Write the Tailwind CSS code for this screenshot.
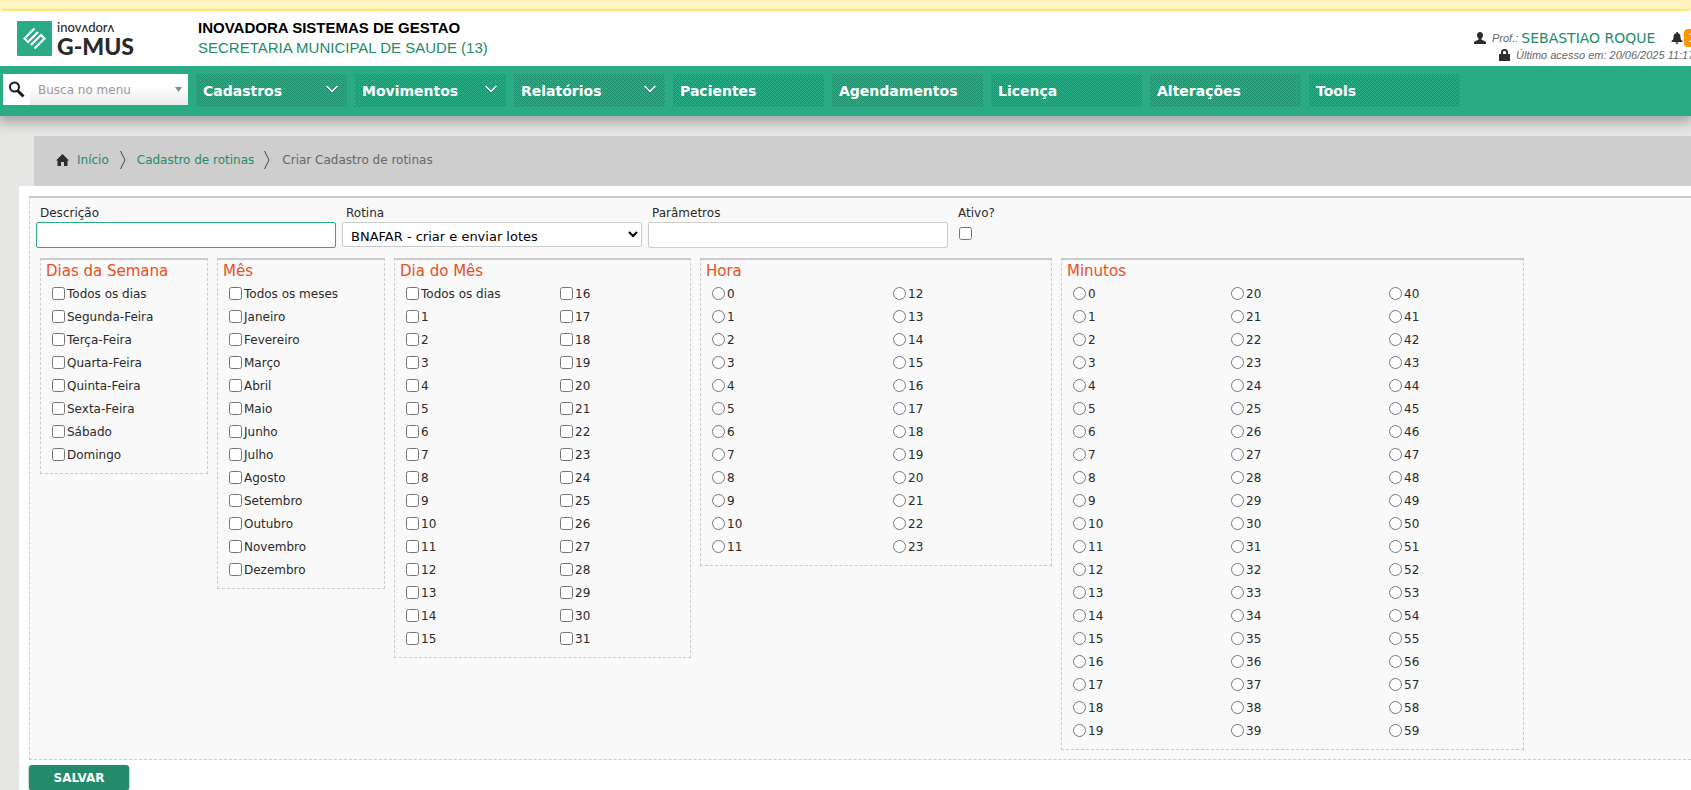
<!DOCTYPE html>
<html lang="pt-BR">
<head>
<meta charset="utf-8">
<meta name="viewport" content="width=device-width, initial-scale=1">
<title>Criar Cadastro de rotinas</title>
<script src="https://cdn.jsdelivr.net/npm/@tailwindcss/browser@4"></script>
</head>
<body class="min-h-screen overflow-x-hidden bg-[#e6e6e4] font-['DejaVu_Sans',sans-serif] text-xs text-[#2a2a2a]">
<div class="flex min-h-screen flex-col">
  <div class="relative z-10 bg-white"><div class="h-[11px] rounded-b border-b-2 border-[#fde770] bg-[#fff4bd]"></div></div>

  <header class="relative z-10 flex h-[55px] overflow-hidden bg-white pl-[17px]">
    <a href="#" class="flex w-[181px] shrink-0 items-start gap-[5px] pt-[10px] text-[#2a2a2a]">
      <svg class="size-[35px] shrink-0" viewBox="0 0 35 35" fill="none" aria-hidden="true">
        <rect width="35" height="35" rx="1" fill="#2bab84"/>
        <g stroke="#fff" stroke-width="2.200">
          <path d="M17.500 7.500 7.500 17.500l3.500 3.500L21 11"/>
          <path d="M17.500 27.500l10-10-3.500-3.500-10 10"/>
        </g>
      </svg>
      <span class="flex flex-col font-['Lato',sans-serif]">
        <span class="text-[13px] leading-[12px] font-medium">inovʌdorʌ</span>
        <span class="text-[23px] leading-[26px] font-black">G-MUS</span>
      </span>
    </a>
    <div class="flex shrink-0 flex-col pt-[7px] font-['Liberation_Sans',Arial,sans-serif] text-[15px] leading-[20px]">
      <strong class="text-black">INOVADORA SISTEMAS DE GESTAO</strong>
      <a href="#" class="text-[#238b69]">SECRETARIA MUNICIPAL DE SAUDE (13)</a>
    </div>
    <div class="ml-auto flex w-[217px] shrink-0 flex-col pt-[17px] whitespace-nowrap text-[#666]">
      <div class="flex h-[20px] items-center">
        <svg class="mr-[6px] size-3 shrink-0" viewBox="0 0 12 12" fill="#2d2d2d" aria-hidden="true"><path d="M6 0c2 0 3 1.300 3 3.200C9 4.800 8.300 6 7.500 6.600v1.200L11 9.200q1 .5 1 1.500V12H0v-1.300q0-1 1-1.500l3.500-1.400V6.600C3.700 6 3 4.800 3 3.200 3 1.300 4 0 6 0z"/></svg>
        <span class="mr-[3px] font-['Liberation_Sans',Arial,sans-serif] text-[11px] italic">Prof.:</span>
        <a href="#" class="text-[14px] text-[#238b69]">SEBASTIAO ROQUE</a>
        <svg class="mr-px ml-4 size-3 shrink-0" viewBox="0 0 12 12" fill="#2d2d2d" aria-hidden="true"><path d="M6 0q1 0 1 1.200C9 1.700 9.500 3.500 9.500 5.500c0 2 1 2.500 2 3.500v1H.5V9c1-1 2-1.500 2-3.500 0-2 .5-3.800 2.500-4.300Q5 0 6 0zM4.500 10.500h3Q7.300 12 6 12t-1.500-1.500z"/></svg>
        <span class="h-[18px] rounded-sm bg-[#ff9600] px-1 text-xs leading-[18px] font-bold text-white">13</span>
      </div>
      <div class="flex h-[14px] items-center pl-[25px]">
        <svg class="mr-[6px] h-3 w-[11px] shrink-0" viewBox="0 0 11 12" fill="#2d2d2d" aria-hidden="true"><path fill-rule="evenodd" d="M0 5h2V3q0-3 3.500-3T9 3v2h2v7H0zM4 5h3V3q0-1-1.500-1T4 3z"/></svg>
        <span class="font-['Liberation_Sans',Arial,sans-serif] text-[11px] italic">Último acesso em: 20/06/2025 11:17</span>
      </div>
    </div>
  </header>

  <nav class="relative flex h-[50px] items-start gap-2 bg-[#2bab84] pt-2 pl-[3px] shadow-[0_4px_12px_2px_rgba(0,0,0,0.3)]">
    <div class="flex h-[31px] w-[185px] shrink-0 items-center bg-white">
      <svg class="mx-[5px] size-[17px] shrink-0" viewBox="0 0 17 17" fill="none" stroke="#1a1a1a" aria-hidden="true"><circle cx="6.500" cy="6" r="4.500" stroke-width="2"/><path d="M9.500 9.500l6 6" stroke-width="3"/></svg>
      <div class="flex h-full flex-1 items-center bg-linear-to-t from-[#eaeaea] to-white to-60% pr-[6px] pl-2">
        <input type="text" aria-label="Busca no menu" placeholder="Busca no menu" class="w-full min-w-0 bg-transparent text-xs placeholder-[#999] outline-none">
        <svg class="h-[5px] w-[7px] shrink-0" viewBox="0 0 7 5" fill="#888" aria-hidden="true"><path d="M0 0h7L3.500 5z"/></svg>
      </div>
    </div>
    <ul id="menu" class="flex gap-2"></ul>
  </nav>

  <nav aria-label="Trilha" class="mt-5 ml-[34px] flex h-[50px] items-center bg-[#cecece] pb-[2px] pl-[22px] text-[#666]">
    <svg class="mr-2 h-3 w-[13px]" viewBox="0 0 13 12" fill="#2d2d2d" aria-hidden="true"><path d="M6.500 0 13 6.500h-1.500V12H8V8H5v4H1.500V6.500H0z"/></svg>
    <a href="#" class="text-[#238b69]">Início</a>
    <svg class="mr-[11px] ml-[11px] h-[18px] w-[6px]" viewBox="0 0 6 18" fill="none" stroke="#444" aria-hidden="true"><path d="M.5 0l4.500 9-4.500 9"/></svg>
    <a href="#" class="text-[#238b69]">Cadastro de rotinas</a>
    <svg class="mr-3 ml-[10px] h-[18px] w-[6px]" viewBox="0 0 6 18" fill="none" stroke="#444" aria-hidden="true"><path d="M.5 0l4.500 9-4.500 9"/></svg>
    <span>Criar Cadastro de rotinas</span>
  </nav>

  <main class="ml-[19px] flex-1 bg-white pt-[10px] pl-[10px]">
    <form>
      <div class="border border-t-2 border-r-0 border-dashed border-[#ccc] bg-[#f9f9f9] pb-[9px] [border-top-style:solid]">
        <div class="flex items-start gap-[6px] pt-2 pl-[6px]">
          <div class="flex w-[300px] flex-col">
            <label for="descricao" class="h-[16px] pl-1 leading-[14px]">Descrição</label>
            <input id="descricao" type="text" class="h-[26px] rounded-xs border border-[#2bab84] bg-white px-2 text-[13px] outline-none">
          </div>
          <div class="flex w-[300px] flex-col">
            <label for="rotina" class="h-[16px] pl-1 leading-[14px]">Rotina</label>
            <select id="rotina" class="h-[25px] rounded-xs border border-[#ccc] bg-white pt-[3px] pl-1 text-[13px] text-black"><option>BNAFAR - criar e enviar lotes</option></select>
          </div>
          <div class="flex w-[300px] flex-col">
            <label for="parametros" class="h-[16px] pl-1 leading-[14px]">Parâmetros</label>
            <input id="parametros" type="text" class="h-[26px] rounded-xs border border-[#ccc] bg-white px-2 text-[13px] outline-none">
          </div>
          <div class="flex flex-col items-start pl-1">
            <label for="ativo" class="h-[16px] leading-[14px]">Ativo?</label>
            <input id="ativo" type="checkbox" class="mt-[5px] ml-px size-[13px]">
          </div>
        </div>
        <div id="groups" class="flex items-start gap-[9px] pt-[10px] pl-[10px]"></div>
      </div>
      <button type="submit" class="mt-[5px] h-[25px] w-[100px] rounded-[3px] bg-[#238b69] text-xs font-bold text-white shadow-[0_1px_2px_rgba(0,0,0,0.6)]">SALVAR</button>
    </form>
  </main>
</div>

<script>
const menu = [['Cadastros', 1], ['Movimentos', 1], ['Relatórios', 1], ['Pacientes'], ['Agendamentos'], ['Licença'], ['Alterações'], ['Tools']];
const chevron = '<svg class="relative mb-1 h-2 w-3" viewBox="0 0 12 8" fill="none" aria-hidden="true"><path d="M.5 2.500 6 8l5.500-5.500" stroke="#176b50"/><path d="M.5 1 6 6.500 11.500 1" stroke="#fff" stroke-width="1.500"/></svg>';
const hatch = i => `<svg class="absolute inset-0 size-full" aria-hidden="true"><defs><pattern id="hatch${i}" width="4" height="4" patternUnits="userSpaceOnUse"><path d="M0 0h1v1H0zM1 1h1v1H1zM2 2h1v1H2zM3 3h1v1H3zM3 1h1v1H3zM1 3h1v1H1z" fill="#238b69" shape-rendering="crispEdges"/></pattern></defs><rect width="100%" height="100%" fill="url(#hatch${i})"/></svg>`;
document.getElementById('menu').innerHTML = menu.map(([name, sub], i) =>
  `<li><a href="#" class="relative flex h-[33px] w-[151px] items-center justify-between pt-px pr-[9px] pl-[7px] text-[14px] font-bold text-white">${hatch(i)}<span class="relative">${name}</span>${sub ? chevron : ''}</a></li>`).join('');

const range = (a, b) => Array.from({ length: b - a + 1 }, (_, i) => String(a + i));
const groups = [
  { id: 'semana', title: 'Dias da Semana', type: 'checkbox', box: 'w-[168px]', col: 'w-[150px]',
    cols: [['Todos os dias', 'Segunda-Feira', 'Terça-Feira', 'Quarta-Feira', 'Quinta-Feira', 'Sexta-Feira', 'Sábado', 'Domingo']] },
  { id: 'mes', title: 'Mês', type: 'checkbox', box: 'w-[168px]', col: 'w-[150px]',
    cols: [['Todos os meses', 'Janeiro', 'Fevereiro', 'Março', 'Abril', 'Maio', 'Junho', 'Julho', 'Agosto', 'Setembro', 'Outubro', 'Novembro', 'Dezembro']] },
  { id: 'dia', title: 'Dia do Mês', type: 'checkbox', box: 'w-[297px]', col: 'w-[154px]',
    cols: [['Todos os dias', ...range(1, 15)], range(16, 31)] },
  { id: 'hora', title: 'Hora', type: 'radio', box: 'w-[352px]', col: 'w-[181px]',
    cols: [range(0, 11), range(12, 23)] },
  { id: 'minuto', title: 'Minutos', type: 'radio', box: 'w-[463px]', col: 'w-[158px]',
    cols: [range(0, 19), range(20, 39), range(40, 59)] },
];
document.getElementById('groups').innerHTML = groups.map(g =>
  `<section role="group" aria-labelledby="${g.id}" class="${g.box} shrink-0 border border-t-2 border-dashed border-[#ccc] pb-[7px] [border-top-style:solid]">
    <h2 id="${g.id}" class="h-[22px] pl-[5px] text-[15px] leading-[22px] text-[#e8501f]">${g.title}</h2>
    <div class="flex overflow-hidden pl-[11px]">${g.cols.map(c =>
      `<ul class="${g.col} shrink-0">${c.map(v =>
        `<li class="h-[23px]"><label class="flex h-[23px] items-center gap-[2px]"><input type="${g.type}" name="${g.id}" class="size-[13px]"><span>${v}</span></label></li>`).join('')}</ul>`).join('')}</div>
  </section>`).join('');
</script>
</body>
</html>
